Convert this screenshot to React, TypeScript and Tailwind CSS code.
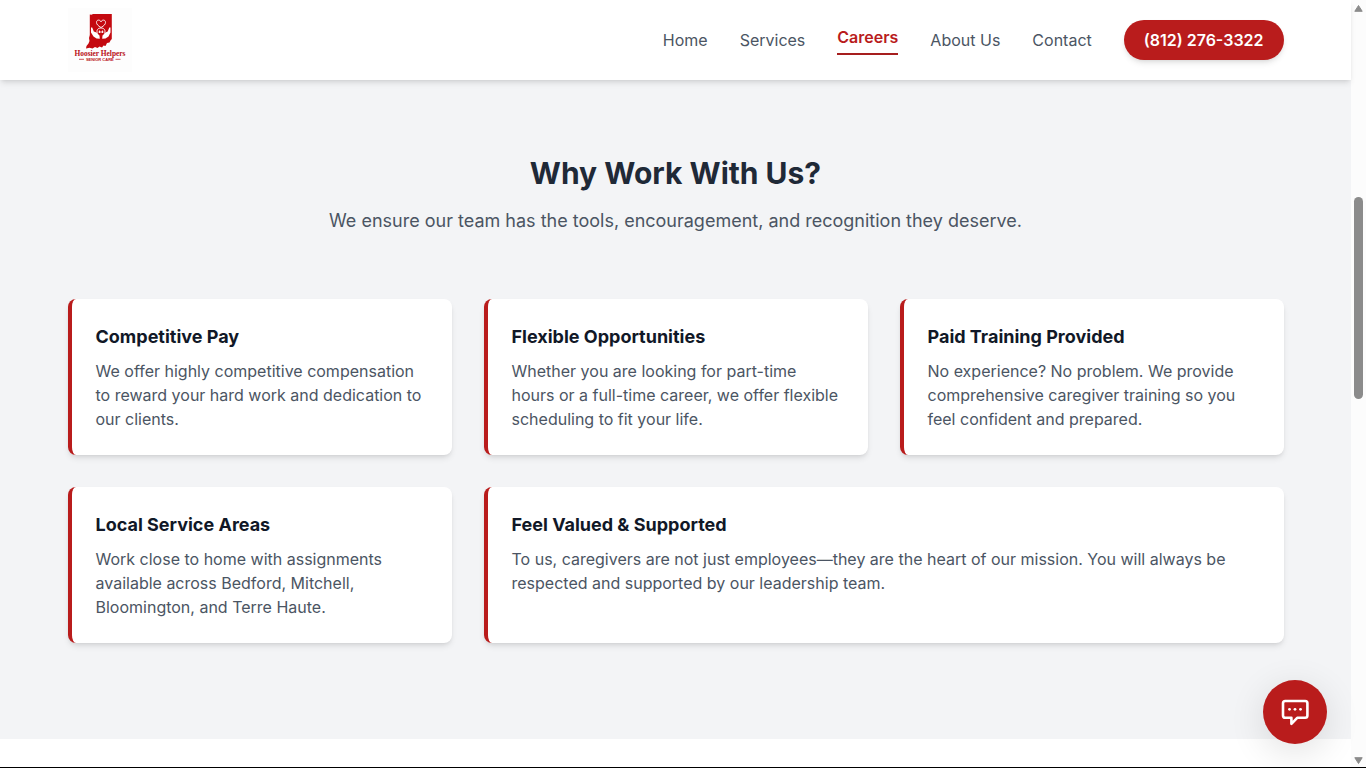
import { useState } from "react";

interface Benefit {
  title: string;
  text: string;
  wide?: boolean;
}

const links = ["Home", "Services", "Careers", "About Us", "Contact"];

const benefits: Benefit[] = [
  {
    title: "Competitive Pay",
    text: "We offer highly competitive compensation to reward your hard work and dedication to our clients.",
  },
  {
    title: "Flexible Opportunities",
    text: "Whether you are looking for part-time hours or a full-time career, we offer flexible scheduling to fit your life.",
  },
  {
    title: "Paid Training Provided",
    text: "No experience? No problem. We provide comprehensive caregiver training so you feel confident and prepared.",
  },
  {
    title: "Local Service Areas",
    text: "Work close to home with assignments available across Bedford, Mitchell, Bloomington, and Terre Haute.",
  },
  {
    title: "Feel Valued & Supported",
    text: "To us, caregivers are not just employees—they are the heart of our mission. You will always be respected and supported by our leadership team.",
    wide: true,
  },
];

function Logo() {
  return (
    <svg viewBox="0 0 64 64" className="h-16 w-16" role="img" aria-label="Hoosier Helpers Senior Care">
      <rect width="64" height="64" fill="#fdfdfd" />
      {/* State outline */}
      <path
        d="M21.800 6.600 L23.500 6.800 L25 6 L43.800 6 L43.800 31 L42.500 32.500 L41.500 34.500 L39 35 L37.500 38 L35.500 37.500 L34 39.500 L31.500 38.500 L29.500 40 L27 39 L24.500 40.500 L21.500 39.800 L18 40.600 L18.500 38 L20.500 35.500 L21.500 33 L21 30 L21.800 27 Z"
        fill="#c4090f"
      />
      {/* Heart */}
      <path
        d="M33 19.500 C30 17.800 28.500 16.300 28.500 14.400 C28.500 11.500 32 11.400 33 13.800 C34 11.400 37.500 11.500 37.500 14.400 C37.500 16.300 36 17.800 33 19.500 Z"
        fill="none"
        stroke="#fff"
        strokeWidth="0.9"
      />
      {/* Pair of people between the hands */}
      <path
        d="M29.500 25.500 C28 22 30 20 33 20 C36 20 38 22 36.500 25.500 M30.500 24 H35.500 M31.500 22.500 V25 M34.500 22.500 V25"
        fill="none"
        stroke="#fff"
        strokeWidth="0.9"
      />
      {/* Hands */}
      <path
        d="M23 19.500 L24.200 19.500 L25.800 23.500 L28.500 24.500 L31.500 27.500 L31.800 30.800 L28.500 30.600 L25.500 28.500 L23 24.500 Z M42.500 19.500 L41.300 19.500 L39.700 23.500 L37.500 24.500 L34.500 27.500 L34.200 30.800 L37.500 30.600 L40.500 28.500 L42.500 24.500 Z"
        fill="#fff"
      />
      <text
        x="32"
        y="48"
        textAnchor="middle"
        fontSize="7.400"
        fontWeight="700"
        fill="#b80f16"
        className="font-['Liberation_Serif',serif]"
      >
        Hoosier Helpers
      </text>
      <text
        x="31.800"
        y="52.800"
        textAnchor="middle"
        fontSize="4"
        fontWeight="700"
        fill="#b80f16"
        className="font-['Liberation_Sans',sans-serif]"
      >
        SENIOR CARE
      </text>
      <path d="M11 51.300 H16 M47.500 51.300 H52.500" stroke="#b80f16" strokeWidth="0.7" />
    </svg>
  );
}

function ChatIcon() {
  return (
    <svg viewBox="0 0 32 32" className="h-8 w-8" fill="none" aria-hidden="true">
      <path
        d="M6.200 5 H26.200 Q28.400 5 28.400 7.200 V19.600 Q28.400 21.800 26.200 21.800 H18.200 L12.400 27.800 V21.800 H6.200 Q4 21.800 4 19.600 V7.200 Q4 5 6.200 5 Z"
        stroke="#fff"
        strokeWidth="2.600"
        strokeLinejoin="round"
      />
      <circle cx="10.500" cy="13.300" r="1.400" fill="#fff" />
      <circle cx="16" cy="13.300" r="1.400" fill="#fff" />
      <circle cx="21.500" cy="13.300" r="1.400" fill="#fff" />
    </svg>
  );
}

function Header({ current, onSelect }: { current: string; onSelect: (name: string) => void }) {
  return (
    <header className="relative bg-white shadow-md">
      <div className="mx-auto flex h-20 max-w-7xl items-center justify-between px-8">
        <a href="#home">
          <Logo />
        </a>
        <nav className="flex items-center gap-8">
          {links.map((name) => (
            <a
              key={name}
              href="#"
              onClick={() => onSelect(name)}
              className={
                name === current
                  ? "border-b-2 border-[#a61e1e] pb-1 font-semibold text-[#b91c1c]"
                  : "text-[#4b5563] hover:text-[#b91c1c]"
              }
            >
              {name}
            </a>
          ))}
          <a href="tel:+18122763322" className="rounded-full bg-[#b91c1c] px-5 py-2 font-semibold text-white shadow-md">
            (812) 276-3322
          </a>
        </nav>
      </div>
    </header>
  );
}

function Scrollbar() {
  return (
    <div className="flex w-[15px] shrink-0 flex-col items-center justify-between bg-[#fcfcfc] pt-1 pb-[2px]" aria-hidden="true">
      <svg viewBox="0 0 9 8" className="h-2 w-[9px]">
        <path d="M4.500 1.500 L8.200 7.300 H0.800 Z" fill="#8b8b8b" stroke="#8b8b8b" strokeLinejoin="round" />
      </svg>
      <div className="flex w-[9px] grow flex-col">
        <div className="grow-[185]" />
        <div className="grow-[202] rounded-full bg-[#8b8b8b]" />
        <div className="grow-[358]" />
      </div>
      <svg viewBox="0 0 9 8" className="h-2 w-[9px]">
        <path d="M4.500 6.500 L8.200 0.700 H0.800 Z" fill="#8b8b8b" stroke="#8b8b8b" strokeLinejoin="round" />
      </svg>
    </div>
  );
}

export default function App() {
  const [current, setCurrent] = useState("Careers");

  return (
    <div className="flex min-h-screen border-b border-black bg-white font-[Inter,sans-serif]">
      <div className="min-w-0 flex-1">
        <Header current={current} onSelect={setCurrent} />

        <section className="bg-[#f3f4f6] pt-[75px] pb-24">
          <div className="mx-auto max-w-7xl px-8">
            <div className="mb-16 text-center">
              <h2 className="mb-4 text-3xl font-bold text-[#1f2937]">Why Work With Us?</h2>
              <p className="text-lg text-[#4b5563]">
                We ensure our team has the tools, encouragement, and recognition they deserve.
              </p>
            </div>

            <div className="grid grid-cols-1 gap-8 md:grid-cols-3">
              {benefits.map((benefit) => (
                <div
                  key={benefit.title}
                  className={`rounded-lg border-l-4 border-[#b91c1c] bg-white p-6 shadow-md ${
                    benefit.wide ? "md:col-span-2" : ""
                  }`}
                >
                  <h3 className="mb-2 text-lg font-bold text-[#111827]">{benefit.title}</h3>
                  <p className="text-[#4b5563]">{benefit.text}</p>
                </div>
              ))}
            </div>
          </div>
        </section>
      </div>

      <Scrollbar />

      <button
        type="button"
        aria-label="Open chat"
        className="fixed right-[39px] bottom-6 flex h-16 w-16 items-center justify-center rounded-full bg-[#b91c1c] shadow-[0_8px_36px_rgba(0,0,0,0.12)]"
      >
        <ChatIcon />
      </button>
    </div>
  );
}
